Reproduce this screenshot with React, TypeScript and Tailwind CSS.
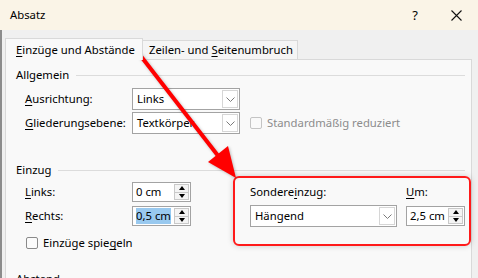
import React from "react";

const font = { fontFamily: '"Noto Sans", "Segoe UI", Arial, sans-serif' };

function U({ children }: { children: React.ReactNode }) {
  return <span className="underline underline-offset-2">{children}</span>;
}

function Chevron() {
  return (
    <svg width="9" height="5" viewBox="0 0 9 5" fill="none">
      <path d="M0.5 0.5 L4.5 4.5 L8.5 0.5" stroke="#7a7a7a" strokeWidth="1" />
    </svg>
  );
}

function Select({ value, width }: { value: string; width: string }) {
  return (
    <div className={`flex h-[22px] ${width} items-stretch border border-[#a3a3a3] bg-white`}>
      <div className="flex flex-1 items-center pl-[4px] leading-none">{value}</div>
      <div className="m-px flex w-[16px] items-center justify-center border border-[#d6d6d6] bg-white">
        <Chevron />
      </div>
    </div>
  );
}

function Spin({ value, selected }: { value: string; selected?: boolean }) {
  return (
    <div className="flex h-[20px] w-[59px] items-stretch border border-[#a3a3a3] bg-white">
      <div className="flex flex-1 items-center pl-[3px] leading-none">
        <span className={selected ? "bg-[#99c9ef] py-[2px]" : ""}>{value}</span>
      </div>
      <div className="my-px mr-px flex w-[15px] flex-col">
        <div className="flex flex-1 items-center justify-center border border-[#c9c9c9] bg-[#f4f4f4]">
          <div className="h-0 w-0 border-x-[3px] border-b-[4px] border-x-transparent border-b-black" />
        </div>
        <div className="flex flex-1 items-center justify-center border border-t-0 border-[#c9c9c9] bg-[#f4f4f4]">
          <div className="h-0 w-0 border-x-[3px] border-t-[4px] border-x-transparent border-t-black" />
        </div>
      </div>
    </div>
  );
}

function Heading({ children }: { children: React.ReactNode }) {
  return (
    <div className="flex h-[16px] items-center pr-[6px]">
      <span className="leading-none">{children}</span>
      <div className="ml-[7px] h-px flex-1 bg-[#dcdcdc]" />
    </div>
  );
}

function Check({ label, disabled }: { label: React.ReactNode; disabled?: boolean }) {
  return (
    <div className="flex h-[16px] items-center gap-[5px]">
      <div
        className={`h-[12px] w-[12px] rounded-[2px] border ${
          disabled ? "border-[#c4c4c4] bg-[#f9f9f9]" : "border-[#8a8a8a] bg-[#fbfbfb]"
        }`}
      />
      <span className={`leading-none ${disabled ? "text-[#8c8c8c]" : ""}`}>{label}</span>
    </div>
  );
}

export default function App() {
  return (
    <div
      className="relative flex h-[278px] w-[478px] flex-col overflow-hidden whitespace-nowrap bg-[#f0f0f0] text-[11.3px] text-black"
      style={font}
    >
      {/* title bar */}
      <div className="flex h-[30px] shrink-0 items-center bg-[#faf4e7] pl-[10px] pr-[16px]">
        <span className="leading-none">Absatz</span>
        <span className="ml-auto mr-[33px] text-[13px] leading-none">?</span>
        <svg width="11" height="11" viewBox="0 0 11 11">
          <path d="M0.5 0.5 L10.5 10.5 M10.5 0.5 L0.5 10.5" stroke="#111" strokeWidth="1.1" />
        </svg>
      </div>

      {/* body */}
      <div className="flex flex-1 flex-col border-l-2 border-[#8c8c8c] pl-[3px] pr-[6px]">
        {/* tabs */}
        <div className="mt-[7px] flex h-[22px] items-end">
          <div className="relative z-10 -mb-px flex h-[22px] w-[138px] items-center border border-b-0 border-[#d9d9d9] bg-[#f9f9f9] pl-[10px] leading-none">
            <span>
              <U>E</U>inzüge und Abstände
            </span>
          </div>
          <div className="flex h-[19px] w-[155px] items-center border border-b-0 border-l-0 border-[#d9d9d9] bg-[#f5f5f5] pl-[6px] leading-none">
            <span>
              Zeilen- und <U>S</U>eitenumbruch
            </span>
          </div>
        </div>

        {/* panel */}
        <div className="flex flex-1 flex-col border border-[#d9d9d9] bg-[#f9f9f9] pl-[10px]">
          <div className="mt-[7px]">
            <Heading>Allgemein</Heading>
          </div>
          <div className="pl-[9px]">
            <div className="mt-[5px] flex items-center">
              <span className="w-[107px] leading-none">
                <U>A</U>usrichtung:
              </span>
              <Select value="Links" width="w-[108px]" />
            </div>
            <div className="mt-[2px] flex items-center">
              <span className="w-[107px] leading-none">
                <U>G</U>liederungsebene:
              </span>
              <Select value="Textkörper" width="w-[108px]" />
              <div className="ml-[10px]">
                <Check label="Standardmäßig reduziert" disabled />
              </div>
            </div>
          </div>

          <div className="mt-[28px]">
            <Heading>Einzug</Heading>
          </div>
          <div className="flex items-start">
            <div className="w-[217px] pl-[9px] pt-[4px]">
              <div className="flex items-center">
                <span className="w-[107px] leading-none">
                  <U>L</U>inks:
                </span>
                <Spin value="0 cm" />
              </div>
              <div className="mt-[4px] flex items-center">
                <span className="w-[107px] leading-none">
                  <U>R</U>echts:
                </span>
                <Spin value="0,5 cm" selected />
              </div>
              <div className="mt-[9px] pl-px">
                <Check
                  label={
                    <>
                      Einzüge spie<U>g</U>eln
                    </>
                  }
                />
              </div>
            </div>
            <div className="-mt-[2px] flex h-[70px] w-[238px] gap-[9px] rounded-[6px] border-2 border-[#ff1a1a] pl-[15px] pt-[6px] shadow-[0_0_6px_rgba(0,0,0,0.18)]">
              <div className="flex flex-col">
                <span className="h-[16px] leading-[16px]">
                  Sondere<U>i</U>nzug:
                </span>
                <div className="mt-[5px]">
                  <Select value="Hängend" width="w-[147px]" />
                </div>
              </div>
              <div className="flex flex-col">
                <span className="h-[16px] leading-[16px]">
                  <U>U</U>m:
                </span>
                <div className="mt-[6px]">
                  <Spin value="2,5 cm" />
                </div>
              </div>
            </div>
          </div>
          <div className="mt-[20px]">
            <Heading>Abstand</Heading>
          </div>
        </div>
      </div>

      {/* annotation arrow */}
      <svg
        className="pointer-events-none absolute left-0 top-0"
        width="478"
        height="278"
        style={{ filter: "drop-shadow(1px 1px 1.5px rgba(0,0,0,0.25))" }}
      >
        <line x1="140" y1="55" x2="219" y2="157" stroke="#ff0000" strokeWidth="4" strokeLinecap="round" />
        <polygon points="236,178 208,162 228,146" fill="#ff0000" />
      </svg>
    </div>
  );
}
